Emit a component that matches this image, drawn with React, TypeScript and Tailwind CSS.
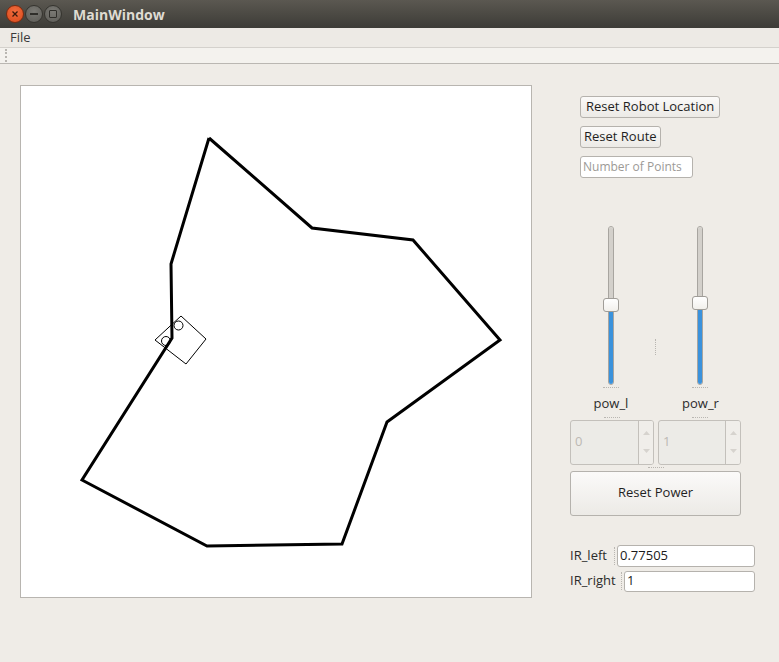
import React from "react";

const font = { fontFamily: '"Open Sans", "DejaVu Sans", sans-serif' };

function WinButton({ kind }: { kind: "close" | "min" | "max" }) {
  const bg =
    kind === "close"
      ? "bg-[radial-gradient(circle_at_50%_35%,#f26c3e,#d84a1b)] border-[#7a2a10]"
      : "bg-[radial-gradient(circle_at_50%_35%,#7b7a75,#5b5a55)] border-[#35342f]";
  return (
    <div className={`w-[18px] h-[18px] rounded-full border flex items-center justify-center ${bg}`}>
      {kind === "close" && (
        <svg width="8" height="8" viewBox="0 0 8 8">
          <path d="M1.5 1.5 L6.5 6.5 M6.5 1.5 L1.5 6.5" stroke="#3a1a0c" strokeWidth="1.3" />
        </svg>
      )}
      {kind === "min" && <div className="w-[8px] h-[2px] bg-[#2f2e2a]" />}
      {kind === "max" && <div className="w-[8px] h-[8px] border-[1.5px] border-[#2f2e2a] rounded-[1px]" />}
    </div>
  );
}

function VSlider({ handleTop }: { handleTop: number }) {
  return (
    <div className="relative w-[18px] h-[159px] flex flex-col items-center">
      <div className="w-[6px] flex-1 flex flex-col rounded-full overflow-hidden border border-[#a8a5a0]">
        <div className="bg-[#d3d0cb]" style={{ height: handleTop }} />
        <div className="flex-1 bg-[#3a92dc] border-t border-[#1f6aa8]" />
      </div>
      <div
        className="absolute left-[1px] w-[16px] h-[14px] rounded-[3px] bg-gradient-to-b from-white to-[#f2f0ec] border border-[#a09d98]"
        style={{ top: handleTop - 7 }}
      />
    </div>
  );
}

function Dots({ className }: { className: string }) {
  return <div className={`border-dotted border-[#b9b6b1] ${className}`} />;
}

function SpinBox({ value }: { value: string }) {
  return (
    <div className="flex h-[45px] shrink-0 border border-[#c3c0bb] rounded-[3px] bg-[#ecebe7] overflow-hidden">
      <div className="flex-1 flex items-center pl-[4px] text-[13px] text-[#bcb9b4]">{value}</div>
      <div className="w-[15px] border-l border-[#c3c0bb] flex flex-col items-center justify-around py-[4px] bg-[#f0eeea]">
        <svg width="7" height="4" viewBox="0 0 7 4">
          <path d="M0 4 L3.5 0 L7 4 Z" fill="#d6d3ce" />
        </svg>
        <svg width="7" height="4" viewBox="0 0 7 4">
          <path d="M0 0 L3.5 4 L7 0 Z" fill="#d6d3ce" />
        </svg>
      </div>
    </div>
  );
}

export default function App() {
  const route =
    "209,138 312,228 413,240 500,340 387,422 342,544 207,546 82,480 172,338 171,264 209,138";
  return (
    <div className="w-[779px] h-[662px] flex flex-col bg-[#efece7] text-[#2b2b2b] overflow-hidden" style={font}>
      {/* title bar */}
      <div className="h-[28px] flex items-center bg-gradient-to-b from-[#5b5851] to-[#3d3c37] pl-[6px]">
        <div className="flex gap-[1px]">
          <WinButton kind="close" />
          <WinButton kind="min" />
          <WinButton kind="max" />
        </div>
        <span className="ml-[11px] text-[14px] font-bold text-[#dfdbd2]">MainWindow</span>
      </div>
      {/* menu bar */}
      <div className="h-[19px] flex items-center bg-[#edeae5] pl-[10px] text-[13px] text-[#3a3a3a]">File</div>
      {/* toolbar */}
      <div className="h-[17px] bg-[#f4f2ee] border-t border-[#d4d1cc] border-b border-b-[#bab7b2] flex items-center pl-[5px]">
        <Dots className="w-0 h-[13px] border-l-2" />
      </div>

      <div className="flex pt-[21px] pl-[20px]">
        {/* canvas */}
        <div className="w-[512px] h-[513px] bg-white border border-[#b8b5b0]">
          <svg width="510" height="511" viewBox="21 86 510 511">
            <polyline points={route} fill="none" stroke="#000" strokeWidth="3" strokeLinejoin="miter" />
            <polygon points="181,316 206,339 186,364 155,340" fill="none" stroke="#000" strokeWidth="1" />
            <circle cx="178.5" cy="325.5" r="4.5" fill="none" stroke="#000" strokeWidth="1" />
            <circle cx="166" cy="341" r="4.5" fill="none" stroke="#000" strokeWidth="1" />
          </svg>
        </div>

        {/* right panel */}
        <div className="ml-[38px] w-[185px] flex flex-col text-[13px]">
          <div className="pl-[10px] pt-[11px] flex flex-col items-start gap-[8px]">
            <button className="h-[22px] px-[5px] whitespace-nowrap rounded-[3px] border border-[#b5b2ad] bg-gradient-to-b from-[#fbfaf9] to-[#eceae6] text-[#1f1f1f]">
              Reset Robot Location
            </button>
            <button className="h-[22px] px-[3px] whitespace-nowrap rounded-[3px] border border-[#b5b2ad] bg-gradient-to-b from-[#fbfaf9] to-[#eceae6] text-[#1f1f1f]">
              Reset Route
            </button>
            <div className="h-[22px] w-[113px] px-[2px] flex items-center whitespace-nowrap overflow-hidden rounded-[3px] border border-[#b5b2ad] bg-white text-[12px] text-[#9c9a96]">
              Number of Points
            </div>
          </div>

          <div className="mt-[48px] flex w-[171px] gap-[4px]">
            <div className="w-[84px] flex flex-col items-center">
              <VSlider handleTop={79} />
              <Dots className="mt-[2px] w-[16px] h-0 border-t" />
              <span className="mt-[6px] text-[#2b2b2b]">pow_l</span>
            </div>
            <div className="w-0 flex flex-col items-center pt-[113px]">
              <Dots className="w-0 h-[16px] border-l" />
            </div>
            <div className="w-[83px] flex flex-col items-center">
              <VSlider handleTop={77} />
              <Dots className="mt-[2px] w-[16px] h-0 border-t" />
              <span className="mt-[6px] text-[#2b2b2b]">pow_r</span>
            </div>
          </div>

          <div className="w-[171px] flex gap-[4px] mt-[3px]">
            <div className="w-[84px] flex flex-col items-center">
              <Dots className="w-[16px] h-0 border-t mb-[2px]" />
              <div className="w-full"><SpinBox value="0" /></div>
            </div>
            <div className="w-[83px] flex flex-col items-center">
              <Dots className="w-[16px] h-0 border-t mb-[2px]" />
              <div className="w-full"><SpinBox value="1" /></div>
            </div>
          </div>
          <div className="w-[171px] flex justify-center h-[6px] items-center">
            <Dots className="w-[16px] h-0 border-t" />
          </div>
          <button className="w-[171px] h-[45px] shrink-0 rounded-[3px] border border-[#b5b2ad] bg-gradient-to-b from-[#fbfaf9] to-[#eceae6] text-[#1f1f1f]">
            Reset Power
          </button>

          <div className="mt-[29px] flex flex-col gap-[4px]">
            <div className="flex items-center h-[22px]">
              <span className="w-[44px]">IR_left</span>
              <Dots className="w-0 h-[18px] border-l mr-[1px]" />
              <div className="flex-1 h-[22px] ml-[1px] px-[2px] flex items-center rounded-[3px] border border-[#b5b2ad] bg-white text-[#1a1a1a]">
                0.77505
              </div>
            </div>
            <div className="flex items-center h-[21px]">
              <span className="w-[51px]">IR_right</span>
              <Dots className="w-0 h-[18px] border-l mr-[1px]" />
              <div className="flex-1 h-[21px] ml-[1px] px-[2px] flex items-center rounded-[3px] border border-[#b5b2ad] bg-white text-[#1a1a1a]">
                1
              </div>
            </div>
          </div>
        </div>
      </div>
    </div>
  );
}
